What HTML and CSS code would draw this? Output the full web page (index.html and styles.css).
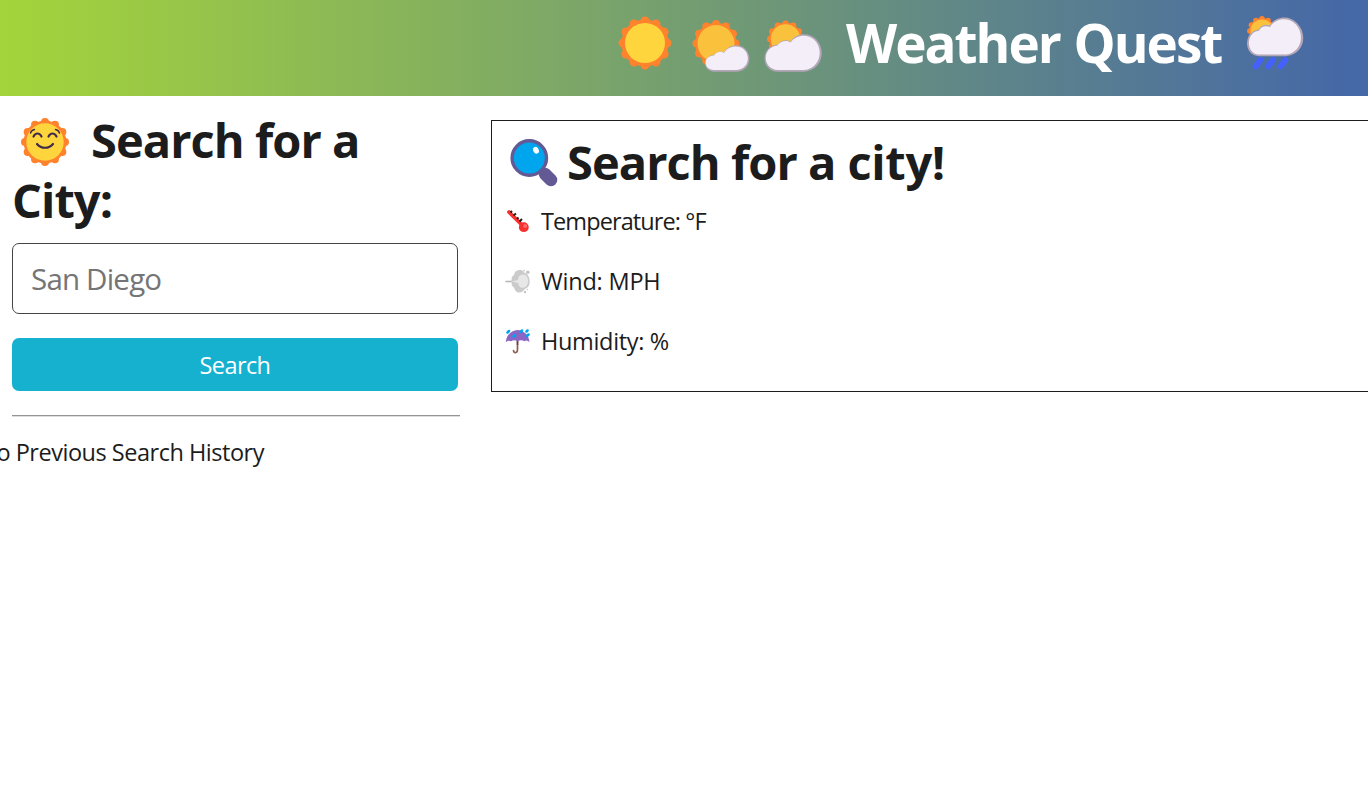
FILE: index.html
```html
<!DOCTYPE html>
<html lang="en">
<head>
<meta charset="utf-8">
<title>Weather Quest</title>
<link rel="stylesheet" href="styles.css">
</head>
<body>
<header class="banner">
  <h1 class="banner-title">
    <svg class="icon-sun" viewBox="0 0 60 60" aria-hidden="true">
      <circle cx="30" cy="30" r="23.6" fill="#ff822d"/>
      <circle cx="30" cy="30" r="22" fill="none" stroke="#ff822d" stroke-width="9" stroke-linecap="round" stroke-dasharray="0 1" pathLength="12"/>
      <circle cx="30" cy="30" r="20" fill="#ffd53e"/>
    </svg>
    <svg class="icon-sun-cloud" viewBox="0 0 60 60" aria-hidden="true">
      <circle cx="26" cy="30.5" r="20.8" fill="#ff822d"/>
      <circle cx="26" cy="30.5" r="19.5" fill="none" stroke="#ff822d" stroke-width="8" stroke-linecap="round" stroke-dasharray="0 1" pathLength="12"/>
      <circle cx="26" cy="30.5" r="18.5" fill="#fac23c"/>
      <path d="M24 58.8C12 58 12 42.500 24 42C26 39 31 37.500 34 39.500C37 33 46 30.500 52 33.500C63 39 62 57.500 47 58.800Z" fill="#b3a6b7"/>
      <path d="M24 57C13 56.500 12.500 43 24 42.500C26 39 31 37.500 34 40C37 34 45 32 51 34.500C61 39 60.500 56 46.500 57Z" fill="#f3eef8"/>
    </svg>
    <svg class="icon-cloud-sun" viewBox="0 0 60 60" aria-hidden="true">
      <circle cx="23.500" cy="26" r="16.200" fill="#ff822d"/>
      <circle cx="23.500" cy="26" r="15.200" fill="none" stroke="#ff822d" stroke-width="6.500" stroke-linecap="round" stroke-dasharray="0 1" pathLength="12"/>
      <circle cx="23.500" cy="26" r="14.700" fill="#fac23c"/>
      <path d="M16 58.800C-2 58 -2 33 16 31.500C18 27 25 26 28.500 28.500C33 20 47 18.500 54 26C65.500 38 59 58 42 58.800Z" fill="#b3a6b7"/>
      <path d="M16 57C-.5 56 0 34 15.500 32.500C18 28 25 26.500 28.500 29.500C34 21 47 20.500 53 27.500C62.500 38 57 56.200 42 57Z" fill="#f3eef8"/>
    </svg>
    <span class="banner-text"><span class="banner-first">Weather</span> <span class="banner-second">Quest</span></span>
    <svg class="icon-rain" viewBox="0 0 60 60" aria-hidden="true">
      <circle cx="17" cy="17" r="12.900" fill="#ff822d"/>
      <circle cx="17" cy="17" r="12.200" fill="none" stroke="#ff822d" stroke-width="5.500" stroke-linecap="round" stroke-dasharray="0 1" pathLength="12"/>
      <circle cx="17" cy="17" r="11.500" fill="#fac23c"/>
      <path d="M14 42.200C-2 42 -2 17 14 15.500C16 11 21 10 24.500 11.500C31 1.500 45 1 52 9C64 21 58 41 41 42.200Z" fill="#b3a6b7"/>
      <path d="M14 40.500C.5 40 .5 18 14 16.800C16 12 21 11.500 25 13C31 3.500 44 3 51 10.500C61 22 55 39.500 41 40.500Z" fill="#f3eef8"/>
      <path d="M15.500 46L10.500 52.500M28 46L23 52.500M40.500 46L35.500 52.500" stroke="#4461ff" stroke-width="5.600" stroke-linecap="round"/>
    </svg>
  </h1>
</header>
<main class="page">
  <aside class="sidebar">
    <h2 class="heading">
      <svg class="icon-face" viewBox="0 0 48 48" aria-hidden="true">
        <circle cx="24" cy="24" r="21.400" fill="#ff822d"/>
        <circle cx="24" cy="24" r="20" fill="none" stroke="#ff822d" stroke-width="8" stroke-linecap="round" stroke-dasharray="0 1" pathLength="12"/>
        <circle cx="24" cy="24" r="18.700" fill="#ffd53e"/>
        <g fill="none" stroke="#402a4c" stroke-width="2.200" stroke-linecap="round">
          <path d="M12.500 18.500C14.500 14.500 18.500 14.500 20.500 18.500M27.500 18.500C29.500 14.500 33.500 14.500 35.500 18.500M16 26C20 31 28 31 32 26"/>
          <path d="M9.500 15Q10.500 12 13.500 11.500M34.500 11.500Q37.500 12 38.500 15" stroke-width="1.500"/>
        </g>
      </svg><span class="heading-text">Search for a</span>
      <span class="heading-text heading-line">City:</span>
    </h2>
    <form class="search-form">
      <input class="search-input" type="text" placeholder="San Diego">
      <button class="search-button" type="button">Search</button>
    </form>
    <hr class="rule">
    <p class="history">No Previous Search History</p>
  </aside>
  <section class="card">
    <h2 class="card-heading">
      <svg class="icon-lens" viewBox="0 0 48 48" aria-hidden="true">
        <path d="M35 35L41 41" stroke="#635994" stroke-width="12.500" stroke-linecap="round"/>
        <path d="M29 29L35 35" stroke="#635994" stroke-width="4"/>
        <circle cx="19.300" cy="19" r="17.200" fill="#00a6ed" stroke="#635994" stroke-width="3.400"/>
        <ellipse cx="26" cy="11.300" rx="2.700" ry="3.500" transform="rotate(-30 26 11.300)" fill="#fff"/>
      </svg>
      <span class="heading-text">Search for a<span class="heading-tail"> city!</span></span>
    </h2>
    <div class="reading">
      <svg class="icon-small" viewBox="0 0 26 26" aria-hidden="true">
        <path d="M4 4L18.500 18.500" stroke="#f8312f" stroke-width="3.800" stroke-linecap="round"/>
        <circle cx="18.800" cy="19.200" r="4.900" fill="#f8312f"/>
        <circle cx="20.200" cy="18" r="2" fill="#ff6a68"/>
        <path d="M5.500 4.500L7 3M8.500 7.500L11 5.500M12 11L13.500 9.500M14.500 13.500L17 11" stroke="#1c1c1c" stroke-width="1.900"/>
      </svg>
      <span class="reading-temp">Temperature: °F</span>
    </div>
    <div class="reading">
      <svg class="icon-small" viewBox="0 0 26 26" aria-hidden="true">
        <path d="M1 13.500H9" stroke="#b5b5b5" stroke-width="1.500" stroke-linecap="round"/>
        <path d="M14 2C18 1.500 19 4 20 5C25 6 27 18 21 20.500C19 21 18 25 13 24.500C9 23 10 20 8.500 19C5.500 17 7.500 14.500 6 13.500C7.500 12 5.500 9 8.500 7.500C10 6 9 3 14 2Z" fill="#cbcbcb"/>
        <path d="M16 7C22 4 26 14 20.500 19C16 21 14 19 13 15L7 13.500L13 12Q13 8 16 7Z" fill="#e7e7e7"/>
        <circle cx="22.800" cy="4.200" r="1.800" fill="#c4c4c4"/><circle cx="19.200" cy="2.600" r=".8" fill="#c4c4c4"/><circle cx="20" cy="24" r="1.200" fill="#c4c4c4"/><circle cx="22.500" cy="21.500" r=".7" fill="#c4c4c4"/>
      </svg>
      <span class="reading-wind">Wind: MPH</span>
    </div>
    <div class="reading">
      <svg class="icon-small" viewBox="0 0 26 26" aria-hidden="true">
        <path d="M12.500 10V21.500C12.500 25.500 8.500 25.500 8.500 22.500" fill="none" stroke="#8e5f4b" stroke-width="1.700" stroke-linecap="round"/>
        <path d="M12.500 12V17" stroke="#5c4260" stroke-width="1.500"/>
        <path d="M.8 14.300C1.500 6 7 2.500 12.500 2C19 2.500 24 7 24.500 14.300Q22 11.500 19.500 13.300Q16 11 12.500 13.300Q9.500 11 6 13.300Q3.500 12 .8 14.300Z" fill="#8d65c5"/>
        <path d="M2.500 4.500L4 3M8.500 8.500L10 7M15.500 4L17 2.500M22 8L23.500 6.500M21.500 3.500L22.500 2.500" stroke="#00a6ed" stroke-width="2.500" stroke-linecap="round"/>
      </svg>
      <span class="reading-humidity">Humidity: %</span>
    </div>
  </section>
</main>
</body>
</html>
```

FILE: styles.css
```css
* { box-sizing: border-box; }
html { overflow: hidden; }
body {
  margin: 0;
  height: 798px;
  overflow: hidden;
  background: #fff;
  color: #1c1c1c;
  font-family: "Open Sans", "Noto Sans", sans-serif;
  font-size: 23.5px;
}
h1, h2, p { margin: 0; }
svg { display: block; flex: none; }
.banner {
  height: 96px;
  background: linear-gradient(to right, #a4d43a, #4467a8);
}
.banner-title {
  display: flex;
  height: 86px;
  padding-left: 615px;
  color: #fff;
  font-size: 53px;
  line-height: 86px;
  font-weight: 700;
}
.banner-title svg { width: 60px; height: 60px; margin-top: 13px; }
.banner-title .icon-sun-cloud { margin-left: 15px; }
.banner-title .icon-cloud-sun { margin-left: 12px; }
.banner-title .icon-rain { margin-top: 14px; }
.banner-text {
  flex: none;
  width: 423px;
  padding-left: 24px;
  white-space: nowrap;
}
.banner-first { letter-spacing: -2px; }
.banner-second { letter-spacing: -2px; }
.page {
  display: grid;
  grid-template-columns: 448px minmax(0, 1fr);
  column-gap: 31px;
  padding-left: 12px;
  align-items: start;
}
.sidebar { padding-top: 14px; }
.heading {
  display: flex;
  flex-wrap: wrap;
  padding-left: 9px;
  font-size: 47px;
  line-height: 60px;
}
.heading-text { letter-spacing: -0.95px; white-space: nowrap; }
.heading-tail { letter-spacing: -0.3px; }
.heading-line { flex: 0 0 100%; margin-left: -9px; }
.icon-face { width: 48px; height: 48px; margin: 8px 22px 0 0; }
.search-input {
  display: block;
  width: 446px;
  height: 71px;
  margin: 13px 0 24px;
  padding: 0 18px;
  border: 1px solid #444;
  border-radius: 7px;
  color: #212529;
  font: 29.5px "Open Sans", sans-serif;
  letter-spacing: -0.8px;
}
.search-input::placeholder { color: #757575; opacity: 1; }
.search-button {
  display: block;
  width: 446px;
  height: 53px;
  padding: 1px 0 0;
  border: 0;
  border-radius: 7px;
  background: #17b1d0;
  color: #fff;
  font: 23.5px "Open Sans", sans-serif;
  letter-spacing: -0.6px;
}
.rule {
  height: 2px;
  margin: 24px 0 17px;
  border: 0;
  border-top: 1px solid #949494;
  background: #dedede;
}
.history {
  width: 252px;
  display: flex;
  justify-content: flex-end;
  line-height: 36px;
  letter-spacing: -0.48px;
  white-space: nowrap;
}
.card {
  height: 272px;
  margin-top: 24px;
  padding: 12px;
  border: 1px solid #1c1c1c;
  border-right: 0;
}
.card-heading {
  display: flex;
  height: 60px;
  font-size: 47px;
  line-height: 59px;
}
.icon-lens { width: 48px; height: 48px; margin: 6px 9px 0 6px; }
.reading { display: flex; height: 36px; margin: 10px 0 24px; line-height: 36px; }
.reading + .reading { margin-top: 0; }
.icon-small { width: 26px; height: 26px; margin: 5px 10px 0 1px; }
.reading-temp { letter-spacing: -0.9px; }
.reading-wind { letter-spacing: -0.2px; }
.reading-humidity { letter-spacing: -0.33px; }
```
